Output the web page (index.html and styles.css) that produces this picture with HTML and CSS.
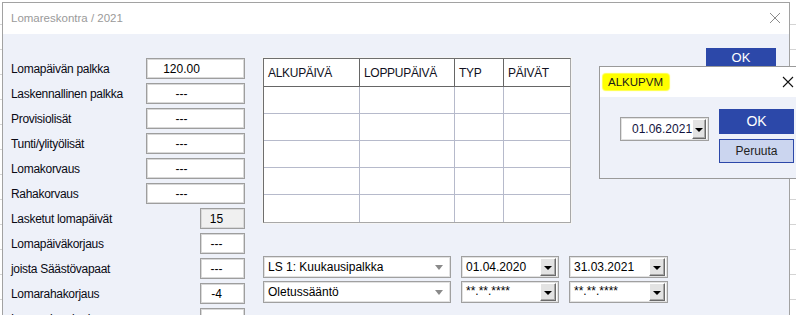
FILE: index.html
```html
<!DOCTYPE html>
<html lang="fi">
<head>
<meta charset="utf-8">
<title>Lomareskontra</title>
<link rel="stylesheet" href="styles.css">
</head>
<body>
<div class="desk">
  <div class="win">
    <div class="titlebar">
      <span class="title">Lomareskontra / 2021</span>
      <svg class="x-main" width="12" height="12" viewBox="0 0 12 12"><path d="M1 1L11 11M11 1L1 11" stroke="#8c8c8c" stroke-width="1" fill="none"/></svg>
    </div>
    <div class="winbody">
      <div class="form">
        <div class="row"><span class="lbl">Lomapäivän palkka</span><span class="box wide">120.00</span></div>
        <div class="row"><span class="lbl">Laskennallinen palkka</span><span class="box wide">---</span></div>
        <div class="row"><span class="lbl">Provisiolisät</span><span class="box wide">---</span></div>
        <div class="row"><span class="lbl">Tunti/ylityölisät</span><span class="box wide">---</span></div>
        <div class="row"><span class="lbl">Lomakorvaus</span><span class="box wide">---</span></div>
        <div class="row"><span class="lbl">Rahakorvaus</span><span class="box wide">---</span></div>
        <div class="row"><span class="lbl">Lasketut lomapäivät</span><span class="box small ro">15</span></div>
        <div class="row"><span class="lbl">Lomapäiväkorjaus</span><span class="box small">---</span></div>
        <div class="row"><span class="lbl">joista Säästövapaat</span><span class="box small">---</span></div>
        <div class="row"><span class="lbl">Lomarahakorjaus</span><span class="box small">-4</span></div>
        <div class="row"><span class="lbl">Lomarahan korjaus</span><span class="box small"></span></div>
      </div>
      <div class="mid">
        <div class="grid">
          <div class="hc">ALKUPÄIVÄ</div><div class="hc">LOPPUPÄIVÄ</div><div class="hc">TYP</div><div class="hc last">PÄIVÄT</div>
          <div class="dc"></div><div class="dc"></div><div class="dc"></div><div class="dc last"></div>
          <div class="dc"></div><div class="dc"></div><div class="dc"></div><div class="dc last"></div>
          <div class="dc"></div><div class="dc"></div><div class="dc"></div><div class="dc last"></div>
          <div class="dc"></div><div class="dc"></div><div class="dc"></div><div class="dc last"></div>
          <div class="dc end"></div><div class="dc end"></div><div class="dc end"></div><div class="dc last end"></div>
        </div>
        <div class="sel-rows">
          <div class="sel-row">
            <div class="select"><span>LS 1: Kuukausipalkka</span><span class="caret"></span></div>
            <div class="date"><span>01.04.2020</span><span class="dbtn"><span class="tri"></span></span></div>
            <div class="date d2"><span>31.03.2021</span><span class="dbtn"><span class="tri"></span></span></div>
          </div>
          <div class="sel-row">
            <div class="select"><span>Oletussääntö</span><span class="caret"></span></div>
            <div class="date"><span class="mask">**.**.****</span><span class="dbtn"><span class="tri"></span></span></div>
            <div class="date d2"><span class="mask">**.**.****</span><span class="dbtn"><span class="tri"></span></span></div>
          </div>
        </div>
      </div>
      <div class="side">
        <div class="btn-main">OK</div>
      </div>
    </div>
  </div>

  <div class="popup">
    <div class="ptitle">
      <span class="hl">ALKUPVM</span>
      <svg class="x-pop" width="12" height="12" viewBox="0 0 12 12"><path d="M1 1L11 11M11 1L1 11" stroke="#111" stroke-width="1.1" fill="none"/></svg>
    </div>
    <div class="pbody">
      <div class="pdate"><span>01.06.2021</span><span class="dbtn"><span class="tri"></span></span></div>
      <div class="pbtns">
        <div class="pok">OK</div>
        <div class="pcancel">Peruuta</div>
      </div>
    </div>
  </div>
</div>
</body>
</html>
```

FILE: styles.css
```css
html, body {
  margin: 0;
  padding: 0;
}
body {
  width: 796px;
  height: 315px;
  overflow: hidden;
  background: #ffffff repeating-linear-gradient(to bottom, transparent 0 24px, #d4d4d4 24px 25px);
  font-family: "Liberation Sans", Arial, sans-serif;
  font-size: 12px;
  color: #000;
}
.desk {
  position: relative;
  width: 796px;
  height: 315px;
  padding: 2px 0 0 2px;
  box-sizing: border-box;
}
.win {
  width: 788px;
  height: 340px;
  box-sizing: border-box;
  border: 1px solid #a2a2a2;
  background: #eef1f9;
}
.titlebar {
  height: 31px;
  background: #fff;
  display: flex;
  align-items: center;
  justify-content: space-between;
  padding: 0 8px 0 8px;
}
.title {
  font-size: 11.5px;
  color: #9a9a9a;
  margin-top: -2px;
}
.x-main {
  display: block;
  margin-top: -2px;
}
.winbody {
  display: flex;
  align-items: flex-start;
}
.form {
  padding: 22px 0 0 8px;
  width: 234px;
}
.row {
  height: 25px;
  display: flex;
  align-items: center;
}
.lbl {
  flex: 1;
  white-space: nowrap;
  letter-spacing: -0.3px;
  color: #0a0a14;
}
.box {
  height: 21px;
  box-sizing: border-box;
  border: 1px solid #9e9e9e;
  box-shadow: inset 0 0 0 1px #d9d9d9;
  background: #fff;
  display: flex;
  align-items: center;
  justify-content: center;
}
.box.wide {
  width: 99px;
  padding-right: 28px;
}
.box.small {
  width: 45px;
  padding-right: 12px;
}
.box.ro {
  background: #f0f0f0;
}
.mid {
  margin-left: 18px;
  padding-top: 24px;
}
.grid {
  width: 308px;
  box-sizing: border-box;
  border: 1px solid #6e6e6e;
  border-right-color: #a8a8a8;
  border-bottom-color: #a8a8a8;
  outline: 1px solid #f4f4f4;
  background: #fff;
  display: grid;
  grid-template-columns: 96px 95px 49px 66px;
  grid-template-rows: 28px repeat(5, 27px);
}
.hc {
  border-right: 1px solid #666;
  border-bottom: 1px solid #666;
  display: flex;
  align-items: center;
  padding-left: 4px;
  color: #111122;
  letter-spacing: -0.3px;
}
.dc {
  border-right: 1px solid #b6bacb;
  border-bottom: 1px solid #b6bacb;
}
.last {
  border-right: none;
}
.dc.end {
  border-bottom: none;
}
.sel-rows {
  margin-top: 33px;
  display: flex;
  flex-direction: column;
  gap: 3px;
}
.sel-row {
  display: flex;
  gap: 10px;
}
.select, .date {
  height: 22px;
  box-sizing: border-box;
  border: 1px solid #a0a0a0;
  box-shadow: inset 0 0 0 1px #e2e2e2;
  background: #fff;
  display: flex;
  align-items: center;
}
.select {
  width: 188px;
  padding: 0 0 0 4px;
  justify-content: space-between;
}
.caret {
  width: 0;
  height: 0;
  border-left: 4px solid transparent;
  border-right: 4px solid transparent;
  border-top: 5px solid #8a8a8a;
  margin-right: 7px;
}
.date {
  width: 98px;
  padding-left: 4px;
  justify-content: space-between;
}
.date.d2 {
  width: 99px;
}
.mask {
  margin-top: -3px;
}
.dbtn {
  width: 16px;
  height: 18px;
  box-sizing: border-box;
  margin-right: 2px;
  background: #e3e3e3;
  border-top: 1px solid #fff;
  border-left: 1px solid #fff;
  border-right: 1px solid #6a6a6a;
  border-bottom: 1px solid #6a6a6a;
  box-shadow: inset -1px -1px 0 #a8a8a8;
  display: flex;
  align-items: center;
  justify-content: center;
}
.tri {
  width: 0;
  height: 0;
  border-left: 4px solid transparent;
  border-right: 4px solid transparent;
  border-top: 4px solid #000;
  margin-top: 2px;
}
.side {
  margin-left: auto;
  margin-right: 13px;
  padding-top: 14px;
}
.btn-main {
  width: 70px;
  height: 20px;
  background: #2c48a9;
  color: #fff;
  font-size: 13px;
  text-align: center;
  line-height: 19px;
}

/* popup */
.popup {
  position: absolute;
  left: 599px;
  top: 66px;
  width: 210px;
  height: 113px;
  box-sizing: border-box;
  border: 1px solid #9a9a9a;
  background: #eef1f9;
}
.ptitle {
  height: 30px;
  background: #fff;
  display: flex;
  align-items: center;
  justify-content: space-between;
  padding: 0 14px 0 3px;
}
.hl {
  background: #ffff00;
  border-radius: 3px;
  padding: 2px 6px 2px 5px;
  font-size: 11.5px;
  color: #1a1a1a;
  box-shadow: 0 0 1px 1px #ffff40;
}
.x-pop {
  display: block;
}
.pbody {
  display: flex;
  align-items: flex-start;
}
.pdate {
  margin: 20px 0 0 20px;
  width: 89px;
  height: 24px;
  box-sizing: border-box;
  border: 1px solid #a0a0a0;
  box-shadow: inset 0 0 0 1px #e2e2e2;
  background: #fff;
  display: flex;
  align-items: center;
  justify-content: space-between;
  padding-left: 11px;
  color: #141440;
}
.pdate .dbtn {
  height: 20px;
}
.pbtns {
  margin: 12px 0 0 10px;
  display: flex;
  flex-direction: column;
  gap: 5px;
}
.pok {
  width: 75px;
  height: 25px;
  background: #2c48a9;
  color: #fff;
  font-size: 14px;
  line-height: 25px;
  text-align: center;
}
.pcancel {
  width: 75px;
  height: 24px;
  box-sizing: border-box;
  border: 1px solid #2c48a9;
  background: #cbd5ef;
  color: #222;
  text-align: center;
  line-height: 22px;
}
```
